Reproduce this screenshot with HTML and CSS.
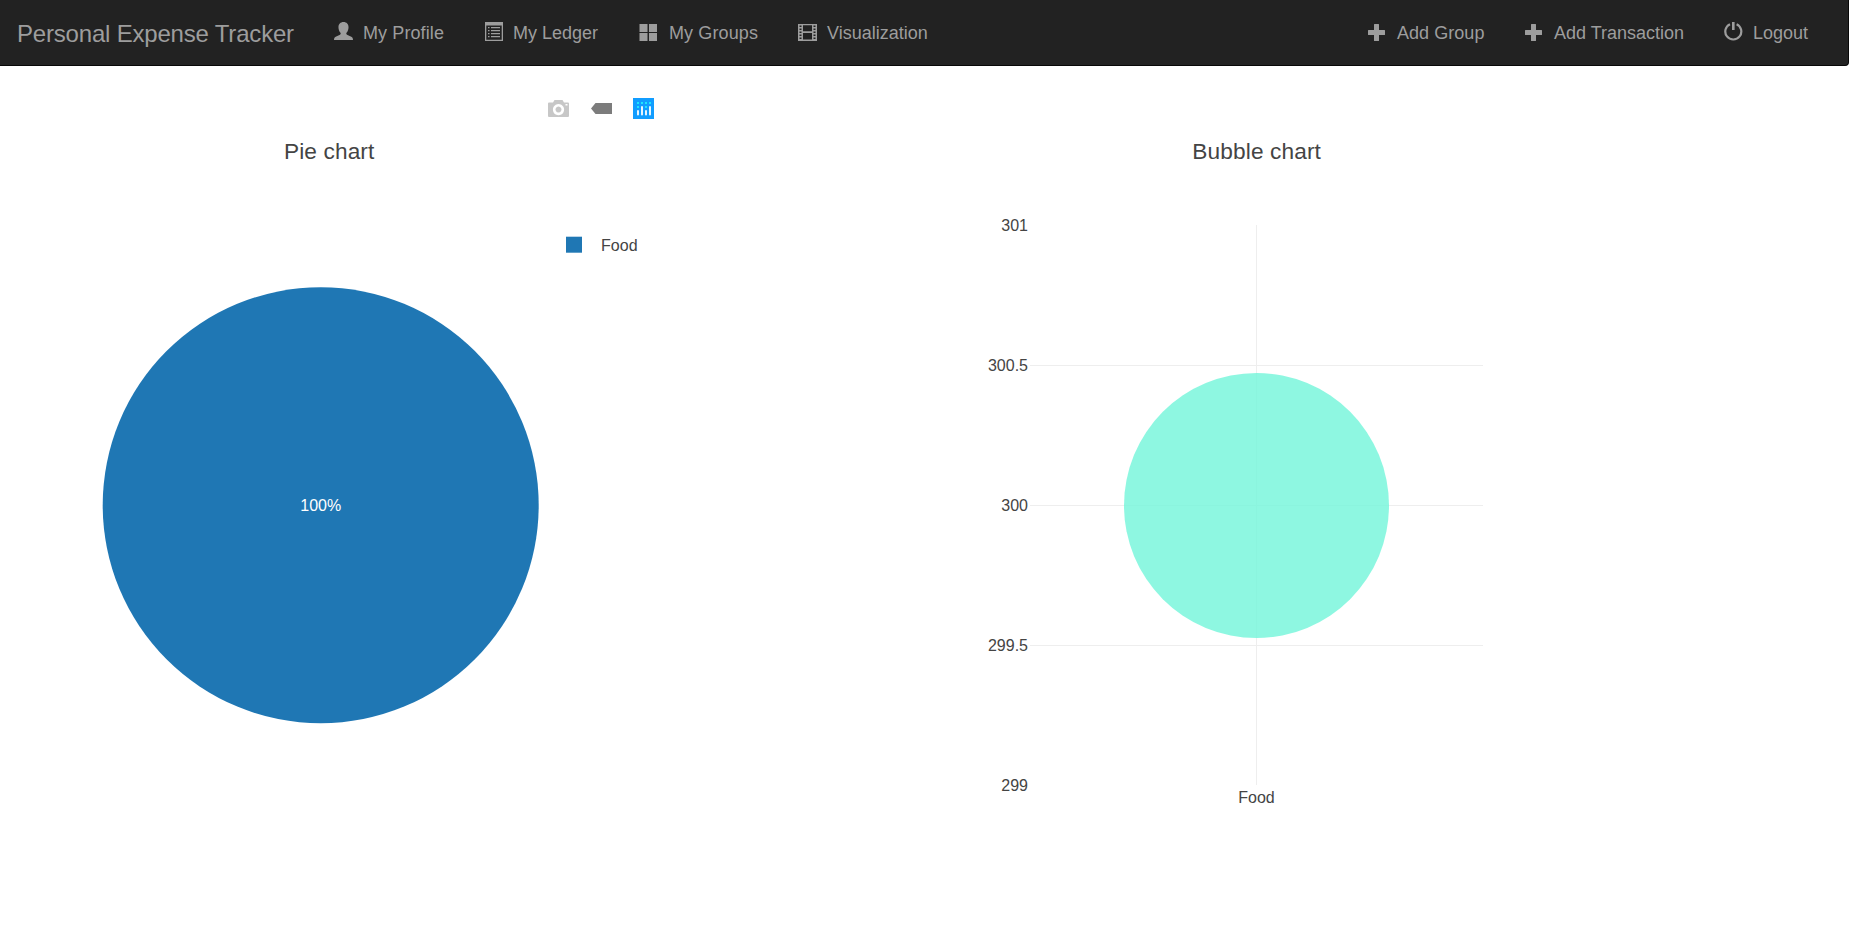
FILE: index.html
```html
<!DOCTYPE html>
<html lang="en">
<head>
<meta charset="utf-8">
<title>Personal Expense Tracker</title>
<link rel="stylesheet" href="styles.css">
</head>
<body>
<nav class="navbar">
  <a class="brand">Personal Expense Tracker</a>
  <ul class="nav">
    <li class="item profile"><svg class="icon" viewBox="0 0 20 20"><path d="M10 0c3.300 0 5.300 2.300 5.300 5.400 0 2.200-.8 4.500-2.100 5.900-.5.700-.3 1.700.5 2.100l4.500 2c1.300.6 1.800 1.600 1.800 3.600H0c0-2 .5-3 1.800-3.600l4.500-2c.8-.4 1-1.400.5-2.100-1.300-1.400-2.100-3.700-2.100-5.900C4.700 2.300 6.700 0 10 0z"/></svg><span>My Profile</span></li>
    <li class="item ledger"><svg class="icon" viewBox="0 0 19 19"><path fill-rule="evenodd" d="M0 0h18v19H0zM1.300 3.500v14.200h15.400V3.500z"/><path d="M3 5h1.500v1.300H3zM6 5h9v1.300H6zM3 8h1.500v1.300H3zM6 8h9v1.300H6zM3 11h1.500v1.300H3zM6 11h9v1.300H6zM3 14h1.500v1.300H3zM6 14h9v1.300H6z"/></svg><span>My Ledger</span></li>
    <li class="item groups"><svg class="icon" viewBox="0 0 19 19"><path d="M.5 2h8v8h-8zM10 2h8v8h-8zM.5 11h8v8h-8zM10 11h8v8h-8z"/></svg><span>My Groups</span></li>
    <li class="item visual"><svg class="icon" viewBox="0 0 19 19"><path fill-rule="evenodd" d="M0 2h19v17H0zM5 3.300v6h9v-6zM5 11v6.500h9V11zM1.500 3.500V5h2V3.500zM1.500 6.500V8h2V6.500zM1.500 9.500V11h2V9.500zM1.500 12.500V14h2v-1.500zM1.500 15.500V17h2v-1.500zM15.500 3.500V5h2V3.500zM15.500 6.500V8h2V6.500zM15.500 9.500V11h2V9.500zM15.500 12.500V14h2v-1.500zM15.500 15.500V17h2v-1.500z"/></svg><span>Visualization</span></li>
  </ul>
  <ul class="nav right">
    <li class="item add-group"><svg class="icon" viewBox="0 0 19 19"><path d="M6 2.500q0-.5.5-.5h4q.5 0 .5.500V8h5.500q.5 0 .5.500v4q0 .5-.5.500H11v5.500q0 .5-.5.500h-4q-.5 0-.5-.5V13H.5q-.5 0-.5-.5v-4Q0 8 .5 8H6z"/></svg><span>Add Group</span></li>
    <li class="item add-transaction"><svg class="icon" viewBox="0 0 19 19"><path d="M6 2.500q0-.5.5-.5h4q.5 0 .5.500V8h5.500q.5 0 .5.500v4q0 .5-.5.500H11v5.500q0 .5-.5.500h-4q-.5 0-.5-.5V13H.5q-.5 0-.5-.5v-4Q0 8 .5 8H6z"/></svg><span>Add Transaction</span></li>
    <li class="item logout"><svg class="icon" viewBox="0 0 19 19"><path d="M6 2.200a8 8 0 1 0 6.600 0" fill="none" stroke="currentColor" stroke-width="2.200"/><path d="M8 0h2.600v8H8z"/></svg><span>Logout</span></li>
  </ul>
</nav>
<main class="charts">
  <svg class="plot" viewBox="0 66 924 874">
    <g class="modebar">
      <path class="camera" fill-rule="evenodd" d="M549 102.500h4l1.500-2.500h8l1.500 2.500h4q1 0 1 1V116q0 1-1 1h-19q-1 0-1-1v-12.500q0-1 1-1zM558.500 104a5.600 5.600 0 1 0 .01 0zM558.500 106.600a3 3 0 1 1-.01 0zM565.500 104v1.500h2V104z"/>
      <path class="tag" d="M591 108.500l4.500-5.500H612v11h-16.500z"/>
      <path class="logo" d="M633 98h21v21h-21z"/>
      <g class="logo-dots"><circle cx="638" cy="103" r="1"/><circle cx="642" cy="103" r="1"/><circle cx="646" cy="103" r="1"/><circle cx="650" cy="103" r="1"/><circle cx="638" cy="107" r="1"/><circle cx="646" cy="107" r="1"/></g>
      <path class="logo-bars" d="M638 111v3.500M642 107v7.500M646 111v3.500M650 107v7.500"/>
    </g>
    <text class="title" x="329.200" y="159">Pie chart</text>
    <circle class="slice" cx="320.700" cy="505.200" r="218"/>
    <text class="label percent" x="320.700" y="511">100%</text>
    <path class="slice" d="M566 236.700h16v16h-16z"/>
    <text class="label legend" x="601" y="251">Food</text>
  </svg>
  <svg class="plot" viewBox="924 66 925 874">
    <text class="title" x="1256.700" y="159">Bubble chart</text>
    <path class="grid" d="M1030 365.500h453M1030 505.500h453M1030 645.500h453M1256.500 225v560"/>
    <circle class="bubble" cx="1256.500" cy="505.500" r="132.500"/>
    <text class="label tick" x="1028" y="231">301</text>
    <text class="label tick" x="1028" y="371">300.5</text>
    <text class="label tick" x="1028" y="511">300</text>
    <text class="label tick" x="1028" y="651">299.5</text>
    <text class="label tick" x="1028" y="791">299</text>
    <text class="label" x="1256.500" y="803">Food</text>
  </svg>
</main>
</body>
</html>
```
FILE: styles.css
```css
* { box-sizing: border-box; }
body { margin: 0; background: #fff; font-family: "Liberation Sans", Arial, sans-serif; overflow: hidden; }
.navbar { display: flex; height: 66px; background: #222; color: #9d9d9d; border: 1px solid #080808; border-top: 0; border-left: 0; border-radius: 0 0 4px 0; padding-left: 17px; }
.brand { width: 317px; font-size: 24px; line-height: 67px; letter-spacing: -.19px; white-space: nowrap; }
.nav { display: flex; margin: 0; padding: 0; list-style: none; font-size: 18px; line-height: 66px; }
.nav.right { margin-left: auto; padding-right: 40px; }
.item { display: flex; align-items: center; white-space: nowrap; }
.icon { width: 19px; height: 19px; margin: -2px 10px 0 0; fill: currentColor; flex: none; }
.profile { width: 151px; letter-spacing: .1px; }
.ledger { width: 154px; }
.ledger .icon { margin-right: 9px; }
.groups { width: 159px; letter-spacing: .12px; }
.groups .icon { margin-right: 11px; }
.visual { width: 152px; }
.add-group { width: 157px; letter-spacing: .05px; }
.add-transaction { width: 199px; }
.charts { display: flex; height: 874px; }
.plot { display: block; flex: none; width: 924px; height: 874px; }
.plot + .plot { width: 925px; }
.title { font-size: 22.670px; letter-spacing: .12px; fill: #444; text-anchor: middle; }
.label { font-size: 16px; fill: #444; text-anchor: middle; }
.label.tick { text-anchor: end; }
.label.legend { text-anchor: start; letter-spacing: .1px; }
.label.percent { fill: #fff; }
.slice { fill: #1f77b4; }
.bubble { fill: #72f5da; opacity: .8; }
.grid { fill: none; stroke: #eee; }
.camera { fill: #c7c7c7; }
.tag { fill: #7c7c7c; }
.logo { fill: #119dff; }
.logo-dots { fill: #25fefd; }
.logo-bars { stroke: #fff; stroke-width: 1.8; stroke-linecap: round; }
```
